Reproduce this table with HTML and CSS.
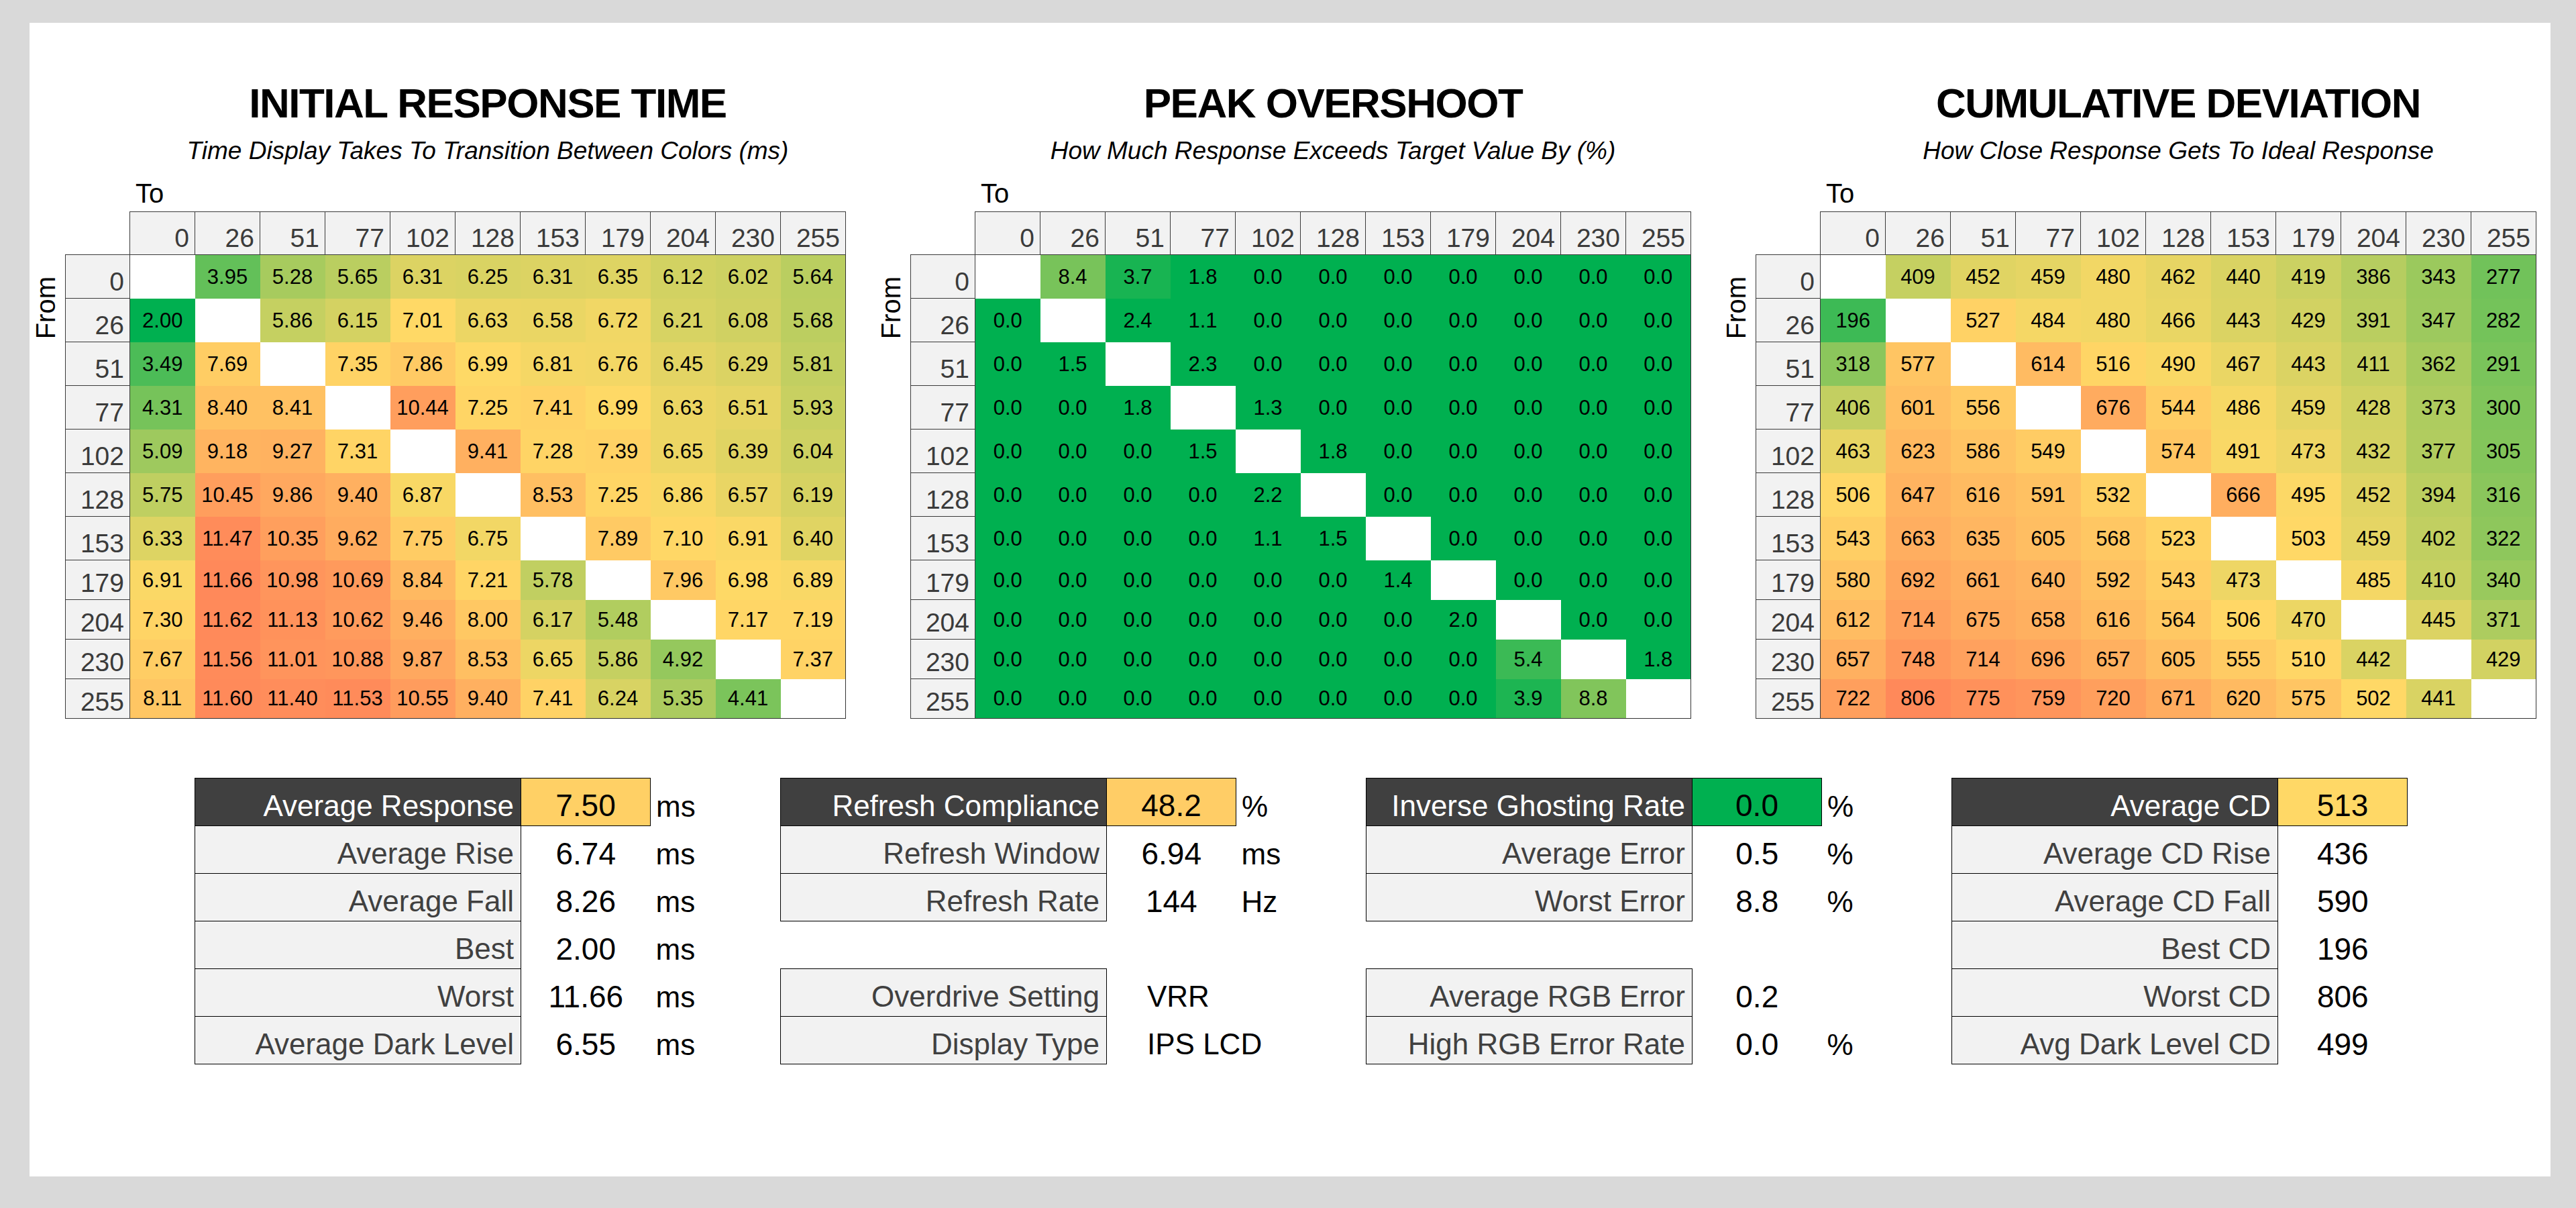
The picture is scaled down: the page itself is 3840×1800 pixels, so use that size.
FILE: index.html
```html
<!DOCTYPE html>
<html lang="en">
<head>
<meta charset="utf-8">
<title>Response Time Chart</title>
<link rel="stylesheet" href="styles.css">
</head>
<body>
<div class="panel">
  <div class="heatmaps">
    <section class="heat">
      <h1 class="title">INITIAL RESPONSE TIME</h1>
      <p class="subtitle">Time Display Takes To Transition Between Colors (ms)</p>
      <div class="to">To</div>
      <div class="from">From</div>
      <table class="hm" data-set="irt"></table>
    </section>
    <section class="heat">
      <h1 class="title">PEAK OVERSHOOT</h1>
      <p class="subtitle">How Much Response Exceeds Target Value By (%)</p>
      <div class="to">To</div>
      <div class="from">From</div>
      <table class="hm" data-set="po"></table>
    </section>
    <section class="heat">
      <h1 class="title">CUMULATIVE DEVIATION</h1>
      <p class="subtitle">How Close Response Gets To Ideal Response</p>
      <div class="to">To</div>
      <div class="from">From</div>
      <table class="hm" data-set="cd"></table>
    </section>
  </div>

  <div class="stats">
    <table class="st">
      <colgroup><col class="c-lab"><col class="c-val"><col class="c-unit"></colgroup>
      <tr class="hd"><td class="lab">Average Response</td><td class="val yellow1">7.50</td><td class="unit">ms</td></tr>
      <tr><td class="lab">Average Rise</td><td class="val">6.74</td><td class="unit">ms</td></tr>
      <tr><td class="lab">Average Fall</td><td class="val">8.26</td><td class="unit">ms</td></tr>
      <tr><td class="lab">Best</td><td class="val">2.00</td><td class="unit">ms</td></tr>
      <tr><td class="lab">Worst</td><td class="val">11.66</td><td class="unit">ms</td></tr>
      <tr><td class="lab">Average Dark Level</td><td class="val">6.55</td><td class="unit">ms</td></tr>
    </table>
    <table class="st">
      <colgroup><col class="c-lab"><col class="c-val"><col class="c-unit"></colgroup>
      <tr class="hd"><td class="lab">Refresh Compliance</td><td class="val yellow2">48.2</td><td class="unit">%</td></tr>
      <tr><td class="lab">Refresh Window</td><td class="val">6.94</td><td class="unit">ms</td></tr>
      <tr><td class="lab">Refresh Rate</td><td class="val">144</td><td class="unit">Hz</td></tr>
      <tr><td class="empty"></td><td class="empty"></td><td class="empty"></td></tr>
      <tr><td class="lab">Overdrive Setting</td><td class="val txt">VRR</td><td class="unit"></td></tr>
      <tr><td class="lab">Display Type</td><td class="val txt">IPS LCD</td><td class="unit"></td></tr>
    </table>
    <table class="st">
      <colgroup><col class="c-lab"><col class="c-val"><col class="c-unit"></colgroup>
      <tr class="hd"><td class="lab">Inverse Ghosting Rate</td><td class="val green">0.0</td><td class="unit">%</td></tr>
      <tr><td class="lab">Average Error</td><td class="val">0.5</td><td class="unit">%</td></tr>
      <tr><td class="lab">Worst Error</td><td class="val">8.8</td><td class="unit">%</td></tr>
      <tr><td class="empty"></td><td class="empty"></td><td class="empty"></td></tr>
      <tr><td class="lab">Average RGB Error</td><td class="val">0.2</td><td class="unit"></td></tr>
      <tr><td class="lab">High RGB Error Rate</td><td class="val">0.0</td><td class="unit">%</td></tr>
    </table>
    <table class="st">
      <colgroup><col class="c-lab"><col class="c-val"><col class="c-unit"></colgroup>
      <tr class="hd"><td class="lab">Average CD</td><td class="val yellow3">513</td><td class="unit"></td></tr>
      <tr><td class="lab">Average CD Rise</td><td class="val">436</td><td class="unit"></td></tr>
      <tr><td class="lab">Average CD Fall</td><td class="val">590</td><td class="unit"></td></tr>
      <tr><td class="lab">Best CD</td><td class="val">196</td><td class="unit"></td></tr>
      <tr><td class="lab">Worst CD</td><td class="val">806</td><td class="unit"></td></tr>
      <tr><td class="lab">Avg Dark Level CD</td><td class="val">499</td><td class="unit"></td></tr>
    </table>
  </div>
</div>
<script src="script.js"></script>
</body>
</html>
```

FILE: styles.css
```css
html, body {
  margin: 0;
  padding: 0;
}
body {
  background: #d9d9d9;
  font-family: "Liberation Sans", Arial, sans-serif;
  color: #000;
  padding: 34px 0 0 44px;
  min-height: 1800px;
  box-sizing: border-box;
}
.panel {
  box-sizing: border-box;
  width: 3758px;
  height: 1719px;
  padding: 89px 0 0 9px;
  background: #ffffff;
}
.heatmaps {
  display: flex;
  gap: 52px;
}
.heat {
  display: grid;
  grid-template-columns: 44px 1164px;
}
.title {
  grid-column: 2;
  margin: 0;
  padding-left: 96px;
  text-align: center;
  font-size: 62px;
  line-height: 62px;
  font-weight: bold;
  letter-spacing: -1.5px;
  color: #000;
}
.subtitle {
  grid-column: 2;
  margin: 21px 0 0;
  padding-left: 96px;
  text-align: center;
  font-size: 37px;
  line-height: 37px;
  font-style: italic;
  color: #000;
}
.to {
  grid-column: 2;
  margin-top: 25px;
  padding-left: 105px;
  font-size: 40px;
  line-height: 40px;
}
.from {
  grid-column: 1;
  grid-row: 4;
  align-self: start;
  justify-self: start;
  margin: 104px 0 0 -5px;
  writing-mode: vertical-rl;
  transform: rotate(180deg);
  font-size: 40px;
  line-height: 40px;
}
.hm {
  grid-column: 2;
  grid-row: 4;
  margin-top: 7px;
  border-collapse: collapse;
  table-layout: fixed;
  width: 1164px;
}
.hm col.c-rh { width: 96px; }
.hm col.c-d { width: 97px; }
.hm th, .hm td {
  padding: 0;
  overflow: hidden;
  white-space: nowrap;
}
.hm tr.r-hd { height: 64px; }
.hm tr.r-a { height: 65px; }
.hm tr.r-b { height: 59px; }
.hm .ch, .hm .rh {
  background: #f2f2f2;
  border: 1px solid #3a3a3a;
  text-align: right;
  vertical-align: bottom;
  padding: 0 8px 5px 0;
  font-size: 39px;
  line-height: 39px;
  font-weight: normal;
  color: #3b3b3b;
}
.hm .corner {
  border: none;
  background: transparent;
}
.hm td.v {
  text-align: center;
  vertical-align: middle;
  font-size: 31px;
  line-height: 31px;
  color: #000;
  background: #ffffff;
}
.hm td.lastc { border-right: 1px solid #333; }
.hm tr.lastr td { border-bottom: 1px solid #333; }

.stats {
  display: grid;
  grid-template-columns: repeat(4, 873px);
  margin: 88px 0 0 237px;
}
.st {
  border-collapse: collapse;
  table-layout: fixed;
  width: 873px;
}
.st col.c-lab { width: 486px; }
.st col.c-val { width: 193px; }
.st col.c-unit { width: 194px; }
.st tr { height: 71px; }
.st td {
  padding: 0 0 7px;
  vertical-align: bottom;
  font-size: 44px;
  line-height: 44px;
  white-space: nowrap;
}
.st .lab {
  text-align: right;
  padding-right: 10px;
  background: #f2f2f2;
  color: #404040;
  border: 1px solid #000;
}
.st .hd .lab {
  background: #404040;
  color: #ffffff;
}
.st .val {
  text-align: center;
  font-size: 46px;
  line-height: 46px;
  color: #000;
}
.st .val.txt {
  text-align: left;
  padding-left: 60px;
  font-size: 44px;
}
.st .hd .val {
  border: 1px solid #000;
}
.st .unit {
  padding-left: 8px;
  text-align: left;
  color: #000;
}
.yellow1 { background: #ffd065; }
.yellow2 { background: #ffcd66; }
.yellow3 { background: #ffd866; }
.green { background: #00b050; }
```

FILE: script.js
```js
(function () {
  var LABELS = [0, 26, 51, 77, 102, 128, 153, 179, 204, 230, 255];
  var N = null;
  var SETS = {
    irt: {
      lo: 2, mid: 7, hi: 11.66, dec: 2,
      rows: [
        [N, 3.95, 5.28, 5.65, 6.31, 6.25, 6.31, 6.35, 6.12, 6.02, 5.64],
        [2.00, N, 5.86, 6.15, 7.01, 6.63, 6.58, 6.72, 6.21, 6.08, 5.68],
        [3.49, 7.69, N, 7.35, 7.86, 6.99, 6.81, 6.76, 6.45, 6.29, 5.81],
        [4.31, 8.40, 8.41, N, 10.44, 7.25, 7.41, 6.99, 6.63, 6.51, 5.93],
        [5.09, 9.18, 9.27, 7.31, N, 9.41, 7.28, 7.39, 6.65, 6.39, 6.04],
        [5.75, 10.45, 9.86, 9.40, 6.87, N, 8.53, 7.25, 6.86, 6.57, 6.19],
        [6.33, 11.47, 10.35, 9.62, 7.75, 6.75, N, 7.89, 7.10, 6.91, 6.40],
        [6.91, 11.66, 10.98, 10.69, 8.84, 7.21, 5.78, N, 7.96, 6.98, 6.89],
        [7.30, 11.62, 11.13, 10.62, 9.46, 8.00, 6.17, 5.48, N, 7.17, 7.19],
        [7.67, 11.56, 11.01, 10.88, 9.87, 8.53, 6.65, 5.86, 4.92, N, 7.37],
        [8.11, 11.60, 11.40, 11.53, 10.55, 9.40, 7.41, 6.24, 5.35, 4.41, N]
      ]
    },
    po: {
      lo: 2.5, mid: 15, hi: 30, dec: 1,
      rows: [
        [N, 8.4, 3.7, 1.8, 0, 0, 0, 0, 0, 0, 0],
        [0, N, 2.4, 1.1, 0, 0, 0, 0, 0, 0, 0],
        [0, 1.5, N, 2.3, 0, 0, 0, 0, 0, 0, 0],
        [0, 0, 1.8, N, 1.3, 0, 0, 0, 0, 0, 0],
        [0, 0, 0, 1.5, N, 1.8, 0, 0, 0, 0, 0],
        [0, 0, 0, 0, 2.2, N, 0, 0, 0, 0, 0],
        [0, 0, 0, 0, 1.1, 1.5, N, 0, 0, 0, 0],
        [0, 0, 0, 0, 0, 0, 1.4, N, 0, 0, 0],
        [0, 0, 0, 0, 0, 0, 0, 2.0, N, 0, 0],
        [0, 0, 0, 0, 0, 0, 0, 0, 5.4, N, 1.8],
        [0, 0, 0, 0, 0, 0, 0, 0, 3.9, 8.8, N]
      ]
    },
    cd: {
      lo: 100, mid: 500, hi: 806, dec: 0,
      rows: [
        [N, 409, 452, 459, 480, 462, 440, 419, 386, 343, 277],
        [196, N, 527, 484, 480, 466, 443, 429, 391, 347, 282],
        [318, 577, N, 614, 516, 490, 467, 443, 411, 362, 291],
        [406, 601, 556, N, 676, 544, 486, 459, 428, 373, 300],
        [463, 623, 586, 549, N, 574, 491, 473, 432, 377, 305],
        [506, 647, 616, 591, 532, N, 666, 495, 452, 394, 316],
        [543, 663, 635, 605, 568, 523, N, 503, 459, 402, 322],
        [580, 692, 661, 640, 592, 543, 473, N, 485, 410, 340],
        [612, 714, 675, 658, 616, 564, 506, 470, N, 445, 371],
        [657, 748, 714, 696, 657, 605, 555, 510, 442, N, 429],
        [722, 806, 775, 759, 720, 671, 620, 575, 502, 441, N]
      ]
    }
  };

  var G = [0, 176, 80], Y = [255, 217, 102], R = [255, 137, 90];

  function colour(v, s) {
    var a, b, t;
    if (v <= s.lo) return "rgb(" + G.join(",") + ")";
    if (v <= s.mid) { t = (v - s.lo) / (s.mid - s.lo); a = G; b = Y; }
    else { t = Math.min(1, (v - s.mid) / (s.hi - s.mid)); a = Y; b = R; }
    var c = a.map(function (x, i) { return Math.round(x + (b[i] - x) * t); });
    return "rgb(" + c.join(",") + ")";
  }

  function el(tag, cls, text) {
    var e = document.createElement(tag);
    if (cls) e.className = cls;
    if (text !== undefined) e.textContent = text;
    return e;
  }

  var tables = document.querySelectorAll("table.hm");
  Array.prototype.forEach.call(tables, function (tbl) {
    var s = SETS[tbl.getAttribute("data-set")];
    var cg = el("colgroup");
    cg.appendChild(el("col", "c-rh"));
    for (var i = 0; i < 11; i++) cg.appendChild(el("col", "c-d"));
    tbl.appendChild(cg);

    var thead = el("thead");
    var hr = el("tr", "r-hd");
    hr.appendChild(el("td", "corner"));
    LABELS.forEach(function (l) { hr.appendChild(el("th", "ch", String(l))); });
    thead.appendChild(hr);
    tbl.appendChild(thead);

    var tbody = el("tbody");
    s.rows.forEach(function (row, r) {
      var tr = el("tr", (r < 7 ? "r-a" : "r-b") + (r === 10 ? " lastr" : ""));
      tr.appendChild(el("th", "rh", String(LABELS[r])));
      row.forEach(function (v, c) {
        var td = el("td", "v" + (c === 10 ? " lastc" : ""));
        if (v !== null) {
          td.textContent = v.toFixed(s.dec);
          td.style.backgroundColor = colour(v, s);
        }
        tr.appendChild(td);
      });
      tbody.appendChild(tr);
    });
    tbl.appendChild(tbody);
  });
})();
```
